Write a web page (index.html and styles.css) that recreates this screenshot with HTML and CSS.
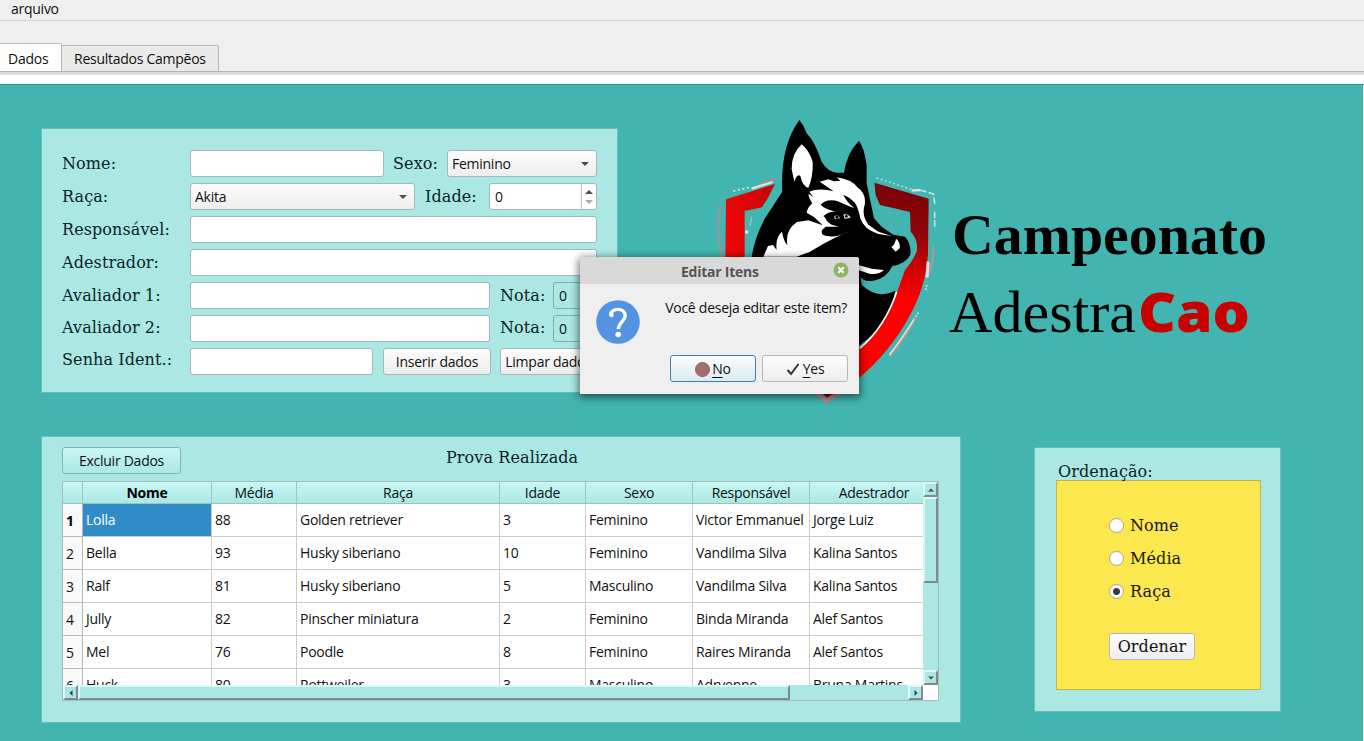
FILE: index.html
```html
<!DOCTYPE html>
<html lang="pt-BR">
<head>
<meta charset="utf-8">
<title>Campeonato AdestraCao</title>
<link rel="stylesheet" href="styles.css">
</head>
<body>
<nav class="menubar"><span>arquivo</span></nav>
<div class="tabs">
  <div class="tab active">Dados</div>
  <div class="tab">Resultados Campẽos</div>
</div>
<div class="pane-edge"></div>
<main class="page">
  <div class="top">
    <form class="panel form">
      <div class="row"><label>Nome:</label><span class="input w194"></span><b class="lab sexo">Sexo:</b><span class="input select w150">Feminino<i class="down"></i></span></div>
      <div class="row"><label>Raça:</label><span class="input select w225">Akita<i class="down"></i></span><b class="lab idade">Idade:</b><span class="input spin w108">0<span class="steps"><i class="up"></i><i class="down off"></i></span></span></div>
      <div class="row"><label>Responsável:</label><span class="input w407"></span></div>
      <div class="row"><label>Adestrador:</label><span class="input w407"></span></div>
      <div class="row"><label>Avaliador 1:</label><span class="input w300"></span><b class="lab nota">Nota:</b><span class="input spin tinted w44">0</span></div>
      <div class="row r6"><label>Avaliador 2:</label><span class="input w300"></span><b class="lab nota">Nota:</b><span class="input spin tinted w44">0</span></div>
      <div class="row r7"><label>Senha Ident.:</label><span class="input w183"></span><span class="btn insert">Inserir dados</span><span class="btn clear">Limpar dados</span></div>
    </form>
    <svg class="dog" viewBox="0 0 750 900">
      <defs>
        <linearGradient id="redR" x1="0" y1="220" x2="0" y2="560" gradientUnits="userSpaceOnUse"><stop offset="0" stop-color="#780306"/><stop offset=".45" stop-color="#8f0408"/><stop offset="1" stop-color="#f00"/></linearGradient>
        <linearGradient id="redL" x1="80" y1="0" x2="230" y2="0" gradientUnits="userSpaceOnUse"><stop offset="0" stop-color="#f00505"/><stop offset="1" stop-color="#c30508"/></linearGradient>
      </defs>
      <path fill="url(#redL)" d="M78 268L225 222 205 262 186 292 134 303 134 450H76z"/>
      <path fill="url(#redR)" d="M523 218L686 266 684 430Q678 530 630 615 575 720 480 802L380 865V790L480 715Q548 655 586 560L615 480Q640 450 650 425 656 390 632 365L630 306 540 285 527 255z"/>
      <g fill="none" stroke="#eadede" stroke-width="5">
        <path d="M155 236L218 216" stroke-width="7"/><path d="M180 220L228 205" stroke="#a88c90" stroke-width="5"/><path d="M100 243L150 232" stroke-dasharray="6 8"/>
        <path d="M62 282Q48 360 65 440" stroke="#8c999a" stroke-width="8"/><path d="M155 322L150 348" stroke="#a9bfbe" stroke-width="4"/><circle cx="140" cy="366" r="3"/>
        <path d="M530 204L640 240" stroke="#c3e1df" stroke-dasharray="5 8"/><path d="M635 242L660 240" stroke-width="7"/><path d="M660 240L700 252 705 285M704 305V350" stroke="#c3e1df" stroke-dasharray="20 6"/>
        <path d="M700 408Q703 450 684 500" stroke="#9b9da0" stroke-width="7"/><path d="M684 455L681 503" stroke-width="9"/><path d="M680 525L677 545M655 608L640 630" stroke-dasharray="5 5"/>
        <path d="M648 620Q620 680 570 738" stroke="#a09ca0" stroke-width="8"/><path d="M642 628Q610 680 568 735" stroke-width="5"/><path d="M350 850L380 873 415 850" stroke="#b98b93" stroke-width="12"/>
      </g>
      <path d="M360 845L380 862 402 845z" fill="#5d1020"/>
      <path d="M155 440Q165 380 195 325L247 245Q240 110 298 30 313 48 320 70 345 95 365 155 382 185 412 188L432 188Q440 130 477 92 493 115 500 165L500 220 506 248 522 325 545 350 580 374 615 380Q635 402 631 435 615 463 577 468 558 507 520 512 490 516 482 500L485 525Q535 570 586 542 570 640 480 705L380 790 150 620z"/>
      <path fill="#fff" d="M305 103Q275 130 275 177L283 215Q292 190 301 198 308 230 325 233 340 200 338 155 327 120 305 103z"/>
      <path fill="#fff" d="M359 215L385 208 402 214 421 212 410 202Q455 208 472 232 500 251 494 285 484 315 505 344L535 365 575 378 535 372Q490 357 481 325 474 290 463 277 443 257 430 256 444 281 463 294 445 288 417 275 382 263 362 284 375 300 419 306 385 302 374 317 376 333 395 344L416 350 377 350 366 360Q362 375 377 377 410 385 442 366 425 393 360 415L290 440H190L204 408 219 405 230 420Q225 382 246 365 251 395 262 405 255 360 291 336L325 331 368 346 342 321 320 308Q323 292 337 280 324 260 326 251L340 262 328 245Q348 236 382 240L401 244Z"/>
      <path d="M310 440Q355 405 442 366 480 395 480 440z"/>
      <path fill="#fff" d="M588 386Q602 397 599 415L587 425 574 411Q586 402 588 386zM475 465L515 476 552 480Q535 496 508 491L475 480z"/>
      <path d="M370 318Q410 290 465 318 440 345 395 338z"/><path fill="#ddd" d="M402 320Q415 309 420 325L405 327zM430 313Q446 310 452 323L434 327z"/><circle cx="411" cy="321" r="5"/><circle cx="439" cy="319" r="4"/>
      <path fill="none" stroke="#fff" stroke-width="5" d="M590 545Q555 650 480 715"/>
    </svg>
    <svg class="wordmark" viewBox="0 0 340 160">
      <text class="w1" x="3" y="64" textLength="315" lengthAdjust="spacingAndGlyphs">Campeonato</text>
      <text class="w2" x="0" y="142" textLength="187" lengthAdjust="spacingAndGlyphs">Adestra</text>
      <text class="w3" x="189" y="142" textLength="112" lengthAdjust="spacingAndGlyphs">Cao</text>
    </svg>
  </div>
  <div class="bottom">
    <section class="panel results">
      <div class="rhead"><span class="btn teal">Excluir Dados</span><h2>Prova Realizada</h2></div>
      <div class="frame">
        <div class="grid">
          <div class="tr th"><span></span><span class="strong">Nome</span><span>Média</span><span>Raça</span><span>Idade</span><span>Sexo</span><span>Responsável</span><span>Adestrador</span></div>
          <div class="tr"><span class="strong">1</span><span class="sel">Lolla</span><span>88</span><span>Golden retriever</span><span>3</span><span>Feminino</span><span>Victor Emmanuel</span><span>Jorge Luiz</span></div>
          <div class="tr"><span>2</span><span>Bella</span><span>93</span><span>Husky siberiano</span><span>10</span><span>Feminino</span><span>Vandilma Silva</span><span>Kalina Santos</span></div>
          <div class="tr"><span>3</span><span>Ralf</span><span>81</span><span>Husky siberiano</span><span>5</span><span>Masculino</span><span>Vandilma Silva</span><span>Kalina Santos</span></div>
          <div class="tr"><span>4</span><span>Jully</span><span>82</span><span>Pinscher miniatura</span><span>2</span><span>Feminino</span><span>Binda Miranda</span><span>Alef Santos</span></div>
          <div class="tr"><span>5</span><span>Mel</span><span>76</span><span>Poodle</span><span>8</span><span>Feminino</span><span>Raires Miranda</span><span>Alef Santos</span></div>
          <div class="tr"><span>6</span><span>Huck</span><span>80</span><span>Rottweiler</span><span>3</span><span>Masculino</span><span>Adryenne</span><span>Bruna Martins</span></div>
        </div>
        <div class="vbar"><span class="sb"><i class="up"></i></span><span class="thumb"></span><span class="gap"></span><span class="sb"><i class="down"></i></span></div>
        <div class="hbar"><span class="sb"><i class="left"></i></span><span class="thumb"></span><span class="gap"></span><span class="sb"><i class="right"></i></span></div>
        <div class="corner"></div>
      </div>
    </section>
    <section class="panel order">
      <h2>Ordenação:</h2>
      <div class="yellow">
        <div class="opt"><i class="radio"></i>Nome</div>
        <div class="opt"><i class="radio"></i>Média</div>
        <div class="opt"><i class="radio on"></i>Raça</div>
        <span class="btn ordenar">Ordenar</span>
      </div>
    </section>
  </div>
</main>
<div class="dialog">
  <header><span>Editar Itens</span>
    <svg class="close" viewBox="0 0 16 16"><circle cx="8" cy="8" r="7.5" fill="#8fb464"/><path d="M5.3 5.3l5.4 5.4M10.7 5.3l-5.4 5.4" stroke="#fff" stroke-width="2"/></svg>
  </header>
  <div class="body">
    <svg class="question" viewBox="0 0 44 44"><circle cx="22" cy="22" r="21.8" fill="#5294e2"/><path d="M14.600 15.500C14.500 7.500 29.200 7 29.200 16.200 28.700 21.300 22.700 22.500 22.300 29" fill="none" stroke="#fff" stroke-width="3.400"/><circle cx="15.500" cy="15" r="2.200" fill="#fff"/><circle cx="22.200" cy="34.500" r="2.800" fill="#fff"/></svg>
    <p>Você deseja editar este item?</p>
  </div>
  <footer>
    <span class="btn no"><i class="stop"></i><span><u>N</u>o</span></span>
    <span class="btn yes"><svg viewBox="0 0 14 14"><path d="M1.500 8l3.500 4L12.500 2" fill="none" stroke="#333" stroke-width="2"/></svg><span><u>Y</u>es</span></span>
  </footer>
</div>
</body>
</html>
```
FILE: styles.css
```css
* { box-sizing: border-box; }
body { margin: 0; width: 1364px; height: 741px; overflow: hidden; background: #efefef; color: #111; font: 14px/18px "Open Sans", "Noto Sans", sans-serif; letter-spacing: -0.26px; position: relative; }
i, b { font-style: normal; font-weight: normal; }
.menubar { height: 21px; padding-left: 11px; border-bottom: 1px solid #d6d6d6; }
.tabs { height: 51px; padding-top: 22px; display: flex; align-items: flex-end; border-bottom: 1px solid #b4b4b4; }
.tab { height: 26px; padding: 4px 12px; border: 1px solid #b9b9b9; border-bottom: 0; border-left: 0; background: #e9e9e9; border-radius: 0 2px 0 0; width: 157px; white-space: nowrap; }
.tab.active { height: 28px; width: 62px; padding: 6px 0 0 8px; background: #fff; border-right: 1px solid #b5b5b5; }
.pane-edge { height: 13px; background: #fff; border-top: 3px solid #dcdcdc; border-bottom: 1px solid #2f9490; }
.page { height: 656px; width: 1363px; background: #42b5b1; border-right: 1px solid #5e9c9a; padding: 25px 0 0 41px; }
.top, .bottom { display: flex; align-items: flex-start; }
.top { height: 300px; margin-bottom: 26px; }
.panel { background: #abe8e4; border: 1px solid #66bfbb; }
.form { width: 577px; height: 265px; margin-top: 18px; padding: 21px 0 0 20px; display: flex; flex-direction: column; gap: 6px; }
.row { height: 27px; display: flex; align-items: flex-start; }
label, .lab, h2, .opt, .ordenar { font: 16px/28px "DejaVu Serif", serif; letter-spacing: 0.1px; color: #0b2324; white-space: nowrap; }
label { width: 128px; }
.r6 label, .r6 .lab { line-height: 26px; }
.r7 label { line-height: 24px; }
.input, .btn { height: 27px; flex: none; border: 1px solid #a3b8b8; border-radius: 3px; background: #fff; line-height: 26px; padding-left: 4px; white-space: nowrap; display: flex; }
.select, .btn { background: linear-gradient(#fdfdfd, #ededed); }
.select { justify-content: space-between; align-items: center; padding-right: 7px; }
.spin { padding-left: 5px; }
.w194 { width: 194px; } .w150 { width: 150px; } .w225 { width: 225px; } .w108 { width: 108px; } .w407 { width: 407px; } .w300 { width: 300px; } .w44 { width: 44px; } .w183 { width: 183px; }
.sexo { width: 63px; padding-left: 9px; } .idade { width: 74px; padding-left: 10px; } .nota { width: 63px; padding-left: 10px; }
.spin { justify-content: space-between; }
.tinted { background: #abe8e4; border-color: #78b0ae; }
.steps { width: 15px; border-left: 1px solid #b5c4c4; display: flex; flex-direction: column; align-items: center; justify-content: center; gap: 6px; }
.up, .down { border: 4px solid transparent; border-top: 0; border-bottom: 4px solid #4c4c4c; width: 0; height: 4px; }
.down { border-bottom: 0; border-top: 4px solid #4c4c4c; }
.off { border-top-color: #aaa; }
.btn { justify-content: center; align-items: center; padding: 1px 0 0; }
.insert { width: 108px; margin: 0 9px 0 10px; }
.clear { width: 97px; }
.dog { width: 250px; height: 300px; margin-left: 82px; flex: none; }
.wordmark { width: 340px; height: 160px; margin-top: 80px; margin-left: -1px; flex: none; overflow: visible; letter-spacing: 0; }
.w1 { font: bold 57px "Liberation Serif", serif; }
.w2 { font: 60px "Liberation Serif", serif; }
.w3 { font: 800 55px "Open Sans", sans-serif; fill: #c80000; }
.results { width: 920px; height: 287px; padding: 10px 0 0 20px; }
.rhead { display: flex; align-items: flex-start; height: 34px; }
.teal { width: 119px; background: linear-gradient(#c9f7f3, #abe8e4); border-color: #7fb5b3; }
h2 { margin: -3px 0 0 265px; font-weight: normal; }
.frame { width: 877px; height: 220px; border: 1px solid #a5bcbb; display: grid; grid-template: 203px 15px / 860px 15px; }
.grid { overflow: hidden; background: #fff; }
.tr { display: grid; grid-template-columns: 20px 129px 85px 203px 86px 107px 117px 129px; grid-template-rows: 100%; height: 33px; line-height: 31px; width: 876px; }
.tr > span { border-right: 1px solid #ccc; border-bottom: 1px solid #ccc; padding-left: 3px; white-space: nowrap; }
.tr > span:first-child { background: #f8f8f8; border-color: #b8b8b8; line-height: 34px; }
.tr .sel { background: #308cc6; color: #fff; }
.th { height: 22px; line-height: 22px; }
.tr.th > span { background: linear-gradient(#c9f7f3, #aae7e3); border-color: #9ec4c2; padding: 0; text-align: center; }
.strong { font-weight: bold; color: #000; }
.vbar, .hbar { display: flex; background: #abe8e4; }
.vbar { flex-direction: column; }
.sb { width: 15px; height: 15px; display: flex; align-items: center; justify-content: center; flex: none; }
.sb, .thumb { background: #abe8e4; border: 2px solid; border-color: #daf8f5 #7f8a8e #7f8a8e #daf8f5; }
.sb i { transform: scale(.75); }
.left, .right { border: 4px solid transparent; width: 4px; height: 8px; border-left: 0; border-right: 4px solid #245; }
.right { border-right: 0; border-left: 4px solid #245; }
.vbar .thumb { height: 86px; } .hbar .thumb { width: 712px; }
.gap { flex: 1; }
.corner { background: #fff; }
.order { width: 247px; height: 265px; margin: 11px 0 0 73px; padding: 10px 0 0 21px; }
.order h2 { margin: 0 0 0 2px; height: 22px; line-height: 27px; }
.yellow { width: 205px; height: 210px; background: #fde74f; border: 1px solid #bdb94f; padding: 31px 0 0 51px; }
.opt { height: 33px; display: flex; align-items: flex-start; color: #171707; line-height: 27px; }
.radio { width: 15px; height: 15px; margin: 6px 6px 0 1px; border: 1px solid #aaa58b; border-radius: 50%; background: #fff; }
.on { background: radial-gradient(circle, #333c44 0 3px, #fff 4px); }
.ordenar { width: 86px; margin: 22px 0 0 1px; color: #111; border-color: #b9b9ae; }
.dialog { position: absolute; left: 580px; top: 257px; width: 279px; height: 137px; background: #efefef; border-radius: 3px 3px 0 0; box-shadow: 0 2px 8px 1px #0009; }
.dialog header { height: 27px; background: #d9d9d9; border-radius: 3px 3px 0 0; color: #555; font-weight: 700; line-height: 29px; display: flex; justify-content: space-between; padding: 0 10px 0 101px; letter-spacing: -0.25px; }
.close { width: 16px; height: 16px; margin-top: 5px; }
.body { display: flex; justify-content: space-between; padding: 16px 12px 0 16px; height: 71px; }
.question { width: 44px; height: 44px; }
.body p { margin: -1px 0 0; color: #111; }
.dialog footer { display: flex; justify-content: flex-end; gap: 6px; padding-right: 11px; }
.dialog .btn { width: 86px; border-color: #b7b7b7; }
.dialog .btn.no { border-color: #3e7fae; background: linear-gradient(#fbfdff, #dceaf2); }
.stop { width: 15px; height: 15px; border-radius: 50%; background: #a66d6d; border: 1px solid #8c6060; margin-right: 2px; }
.yes svg { width: 14px; height: 14px; margin-right: 3px; }
u { text-underline-offset: 3px; }
```
